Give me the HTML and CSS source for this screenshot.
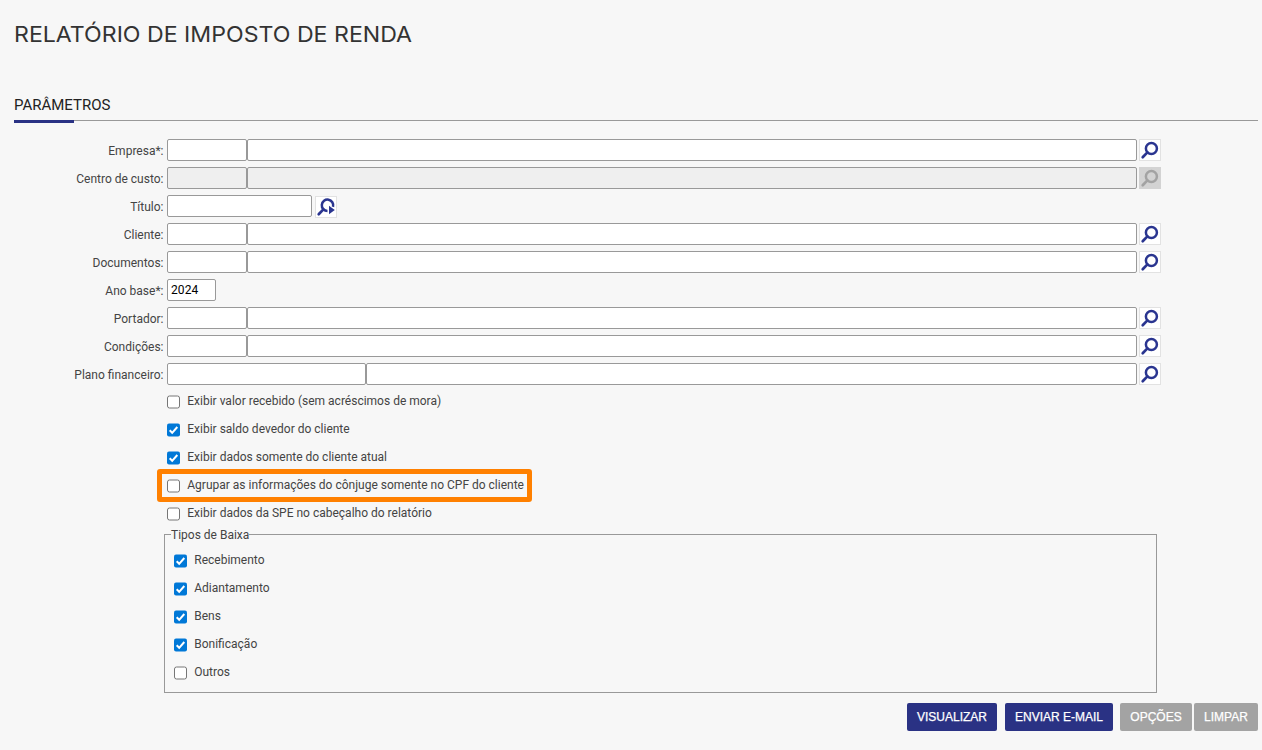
FILE: index.html
```html
<!DOCTYPE html>
<html lang="pt-BR">
<head>
<meta charset="utf-8">
<title>Relatório de Imposto de Renda</title>
<link rel="stylesheet" href="styles.css">
</head>
<body>
<svg class="defs" width="0" height="0">
  <symbol id="lens" viewBox="0 0 22 22"><circle cx="12.4" cy="9.4" r="5.5" fill="none" stroke="currentColor" stroke-width="2.5"/><path d="M8.4 13.4 3.7 18.2" fill="none" stroke="currentColor" stroke-width="2.7" stroke-linecap="round"/></symbol>
  <symbol id="lens-go" viewBox="0 0 22 22"><path d="M12.5 15A5.7 5.7 0 1 1 18 10.8" fill="none" stroke="currentColor" stroke-width="2.5"/><path d="M8.4 13.4 3.7 18.2" fill="none" stroke="currentColor" stroke-width="2.7" stroke-linecap="round"/><path d="M14 9.8v8.4l5.8-4.2z" fill="currentColor"/></symbol>
  <symbol id="off" viewBox="0 0 13 14"><rect x=".5" y="1" width="12" height="12" rx="2" fill="#fff" stroke="#767676"/></symbol>
  <symbol id="on" viewBox="0 0 13 14"><rect y=".5" width="13" height="13" rx="2" fill="#0078d7"/><path d="M2.7 7.3 5.2 9.8 10.3 4" fill="none" stroke="#fff" stroke-width="2"/></symbol>
</svg>
<h1 class="title">RELATÓRIO DE IMPOSTO DE RENDA</h1>
<h2 class="section"><span class="section-name">PARÂMETROS</span></h2>
<form class="form">
  <div class="row"><label class="label">Empresa*:</label><input class="field code"><input class="field desc"><span class="search"><svg><use href="#lens"/></svg></span></div>
  <div class="row"><label class="label">Centro de custo:</label><input class="field code" disabled><input class="field desc" disabled><span class="search off"><svg><use href="#lens"/></svg></span></div>
  <div class="row"><label class="label">Título:</label><input class="field bond"><span class="search low"><svg><use href="#lens-go"/></svg></span></div>
  <div class="row"><label class="label">Cliente:</label><input class="field code"><input class="field desc"><span class="search"><svg><use href="#lens"/></svg></span></div>
  <div class="row"><label class="label">Documentos:</label><input class="field code"><input class="field desc"><span class="search"><svg><use href="#lens"/></svg></span></div>
  <div class="row"><label class="label">Ano base*:</label><input class="field year" value="2024"></div>
  <div class="row"><label class="label">Portador:</label><input class="field code"><input class="field desc"><span class="search"><svg><use href="#lens"/></svg></span></div>
  <div class="row"><label class="label">Condições:</label><input class="field code"><input class="field desc"><span class="search"><svg><use href="#lens"/></svg></span></div>
  <div class="row"><label class="label">Plano financeiro:</label><input class="field plan"><input class="field desc"><span class="search"><svg><use href="#lens"/></svg></span></div>
  <div class="checks">
    <div class="check"><svg class="box"><use href="#off"/></svg><span class="text">Exibir valor recebido (sem acréscimos de mora)</span></div>
    <div class="check"><svg class="box"><use href="#on"/></svg><span class="text">Exibir saldo devedor do cliente</span></div>
    <div class="check"><svg class="box"><use href="#on"/></svg><span class="text">Exibir dados somente do cliente atual</span></div>
    <div class="check marked"><svg class="box"><use href="#off"/></svg><span class="text">Agrupar as informações do cônjuge somente no CPF do cliente</span></div>
    <div class="check"><svg class="box"><use href="#off"/></svg><span class="text">Exibir dados da SPE no cabeçalho do relatório</span></div>
  </div>
  <fieldset class="group">
    <legend class="legend">Tipos de Baixa</legend>
    <div class="check"><svg class="box"><use href="#on"/></svg><span class="text">Recebimento</span></div>
    <div class="check"><svg class="box"><use href="#on"/></svg><span class="text">Adiantamento</span></div>
    <div class="check"><svg class="box"><use href="#on"/></svg><span class="text">Bens</span></div>
    <div class="check"><svg class="box"><use href="#on"/></svg><span class="text">Bonificação</span></div>
    <div class="check"><svg class="box"><use href="#off"/></svg><span class="text">Outros</span></div>
  </fieldset>
  <div class="actions">
    <button type="button" class="btn view">VISUALIZAR</button>
    <button type="button" class="btn mail">ENVIAR E-MAIL</button>
    <button type="button" class="btn grey options">OPÇÕES</button>
    <button type="button" class="btn grey clear">LIMPAR</button>
  </div>
</form>
</body>
</html>
```
FILE: styles.css
```css
* { box-sizing: border-box; }
body { margin: 0; padding: 0 4px 0 14px; height: 750px; overflow: hidden; background: #f7f7f7; font-family: Roboto, "Liberation Sans", sans-serif; font-size: 12px; color: #444; }
.defs { display: block; width: 0; height: 0; }
.title { margin: 0; padding-top: 20px; height: 92px; font: 400 22px/28px Inter, sans-serif; transform: scaleX(1.051); transform-origin: 0 0; color: #333; white-space: nowrap; }
.section { margin: 0; height: 29px; border-bottom: 1px solid #999; font-size: 15px; font-weight: 400; line-height: 27px; color: #222; }
.section-name { display: block; width: 60px; height: 31px; border-bottom: 3px solid #2a3284; }
.form { padding-top: 18px; }
.row { display: flex; align-items: flex-start; height: 28px; width: 1147px; }
.label { width: 149.5px; margin-right: 3.5px; text-align: right; line-height: 24px; white-space: nowrap; }
.field { height: 22px; min-width: 0; margin: 0; padding: 0 3px; border: 1px solid #999; border-radius: 2px; background: #fff; font: 12px Roboto, sans-serif; letter-spacing: 0.1px; color: #000; }
.field:disabled { background: #efefef; }
.code { width: 80px; }
.bond { width: 145px; }
.year { width: 49px; }
.plan { width: 199px; }
.desc { flex: 1; }
.search { width: 22px; height: 22px; margin-left: 2px; border: 1px solid #e2e2e2; background: #fff; color: #2a3590; }
.search svg { display: block; width: 22px; height: 22px; margin: -1px; }
.search.off { background: #d3d3d3; border-color: #d3d3d3; color: #a3a3a3; }
.search.low { margin: 1px 0 0 3px; }
.checks { padding-left: 153px; height: 137px; }
.check { display: flex; align-items: flex-start; height: 28px; }
.box { flex: none; width: 13px; height: 14px; margin: 4px 7.25px 0 0; }
.text { line-height: 21px; white-space: nowrap; }
.marked { width: 375px; height: 33px; margin: -6px 0 1px -10px; padding: 1px 0 0 5px; border: 5px solid #ff8000; border-radius: 3px; }
.group { width: 993px; height: 165px; margin: 0 0 0 150px; padding: 9px 9px 0; border: 1px solid #999; min-width: 0; }
.legend { height: 13px; margin-left: -3px; padding: 0; line-height: 15px; }
.actions { display: flex; justify-content: flex-end; padding-top: 10px; }
.btn { height: 28px; padding: 0; border: 0; border-radius: 2px; background: #2a3284; color: #fff; font: 12px "Liberation Sans", Arial, sans-serif; -webkit-text-stroke: 0.25px #fff; }
.view { width: 90px; margin-right: 8px; }
.mail { width: 108px; margin-right: 7px; }
.options { width: 72px; margin-right: 2px; }
.clear { width: 64px; }
.grey { background: #a3a3a3; }
```
